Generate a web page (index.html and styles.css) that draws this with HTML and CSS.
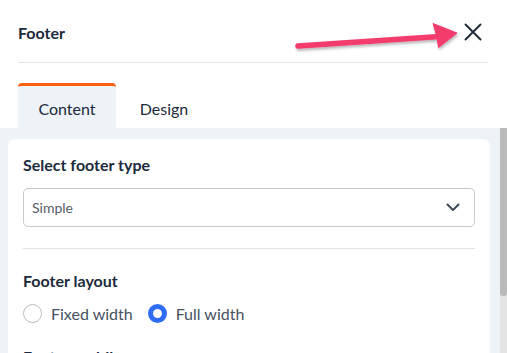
FILE: index.html
```html
<!DOCTYPE html>
<html>
<head>
<meta charset="utf-8">
<link rel="stylesheet" href="styles.css">
</head>
<body>
<div class="panel">
  <header class="head">
    <h1 class="title">Footer</h1>
    <button class="close" aria-label="Close">
      <svg width="18" height="18" viewBox="0 0 18 18"><path d="M1.5 1.5 L16.5 16.5 M16.5 1.5 L1.5 16.5" stroke="#1e2a3a" stroke-width="1.9" fill="none" stroke-linecap="round"/></svg>
    </button>
  </header>
  <nav class="tabs">
    <div class="tab active">Content</div>
    <div class="tab">Design</div>
  </nav>
  <div class="body">
    <div class="scroll">
      <div class="card">
        <h2 class="label">Select footer type</h2>
        <div class="select">
          <span>Simple</span>
          <svg width="14" height="9" viewBox="0 0 14 9"><path d="M1.5 1.5 L7 7 L12.5 1.5" stroke="#3d4a58" stroke-width="2" fill="none" stroke-linecap="round" stroke-linejoin="round"/></svg>
        </div>
        <hr class="sep">
        <h2 class="label">Footer layout</h2>
        <div class="radios">
          <label class="radio"><span class="dot"></span>Fixed width</label>
          <label class="radio"><span class="dot on"></span>Full width</label>
        </div>
        <h2 class="label next">Footer mobile</h2>
      </div>
    </div>
    <div class="scrollbar"><div class="thumb"></div></div>
  </div>
  <svg class="arrow" width="507" height="80" viewBox="0 0 507 80">
    <defs>
      <filter id="sh" x="-10%" y="-50%" width="120%" height="200%">
        <feDropShadow dx="1" dy="2" stdDeviation="1.5" flood-color="#000" flood-opacity="0.3"/>
      </filter>
    </defs>
    <g filter="url(#sh)">
      <line x1="298" y1="46" x2="440" y2="36.5" stroke="#f33a6c" stroke-width="5.5" stroke-linecap="round"/>
      <path d="M433 23.5 L457 33 L438.5 47.5 L437 36.8 Z" fill="#f33a6c" stroke="#f33a6c" stroke-width="1" stroke-linejoin="round"/>
    </g>
  </svg>
</div>
</body>
</html>
```
FILE: styles.css
```css
* { box-sizing: border-box; }
html, body { margin: 0; padding: 0; }
body {
  font-family: Lato, "Open Sans", sans-serif;
  color: #1b2a3c;
  background: #fff;
  width: 507px;
  height: 353px;
  overflow: hidden;
}
.panel {
  position: relative;
  height: 353px;
  display: flex;
  flex-direction: column;
}
.head {
  display: flex;
  align-items: center;
  justify-content: space-between;
  margin: 0 19px 0 18px;
  height: 63px;
  border-bottom: 1px solid #e1e3e8;
}
.title {
  margin: 0;
  font-size: 16px;
  font-weight: 700;
  color: #1b2a3c;
  padding-top: 2px;
}
.close {
  border: 0;
  background: none;
  padding: 0;
  width: 18px;
  height: 18px;
  margin-right: 6px;
  margin-top: 2px;
}
.close svg { display: block; }
.tabs {
  display: flex;
  margin: 20px 0 0 18px;
  height: 45px;
}
.tab {
  width: 98px;
  font-size: 16px;
  color: #1b2a3c;
  display: flex;
  align-items: center;
  justify-content: center;
  padding-top: 3px;
  border-top: 3px solid transparent;
  border-radius: 4px 4px 0 0;
}
.tab + .tab { width: 96px; }
.tab.active {
  background: #eef3f8;
  border-top-color: #fb5f13;
}
.body {
  flex: 1;
  display: flex;
  background: #eef3f8;
  min-height: 0;
}
.scroll {
  flex: 1;
  padding: 11px 10px 0 8px;
  overflow: hidden;
}
.card {
  background: #fff;
  border-radius: 6px 6px 0 0;
  padding: 16px 15px 0 15px;
  height: 300px;
}
.label {
  margin: 0;
  font-size: 16px;
  font-weight: 700;
  color: #1b2a3c;
  line-height: 20px;
}
.select {
  margin-top: 13px;
  height: 39px;
  border: 1px solid #c7c9cc;
  border-radius: 5px;
  display: flex;
  align-items: center;
  justify-content: space-between;
  padding: 0 14px 0 8px;
  font-size: 14px;
  color: #555d66;
}
.sep {
  margin: 21px 0 22px;
  border: 0;
  border-top: 1px solid #e1e3e8;
}
.radios {
  display: flex;
  gap: 15px;
  margin-top: 13px;
}
.radio {
  display: flex;
  align-items: center;
  font-size: 16px;
  color: #46525f;
}
.dot {
  width: 19px;
  height: 19px;
  border-radius: 50%;
  border: 1px solid #b8bcc1;
  margin-right: 9px;
  background: #fff;
}
.dot.on {
  border: 5px solid #2f6df6;
}
.next { margin-top: 24px; }
.scrollbar {
  width: 7px;
  background: #e4e4e4;
}
.thumb {
  height: 168px;
  background: #bababa;
  border-radius: 0 0 3px 3px;
}
.arrow {
  position: absolute;
  left: 0;
  top: 0;
  pointer-events: none;
}
```
